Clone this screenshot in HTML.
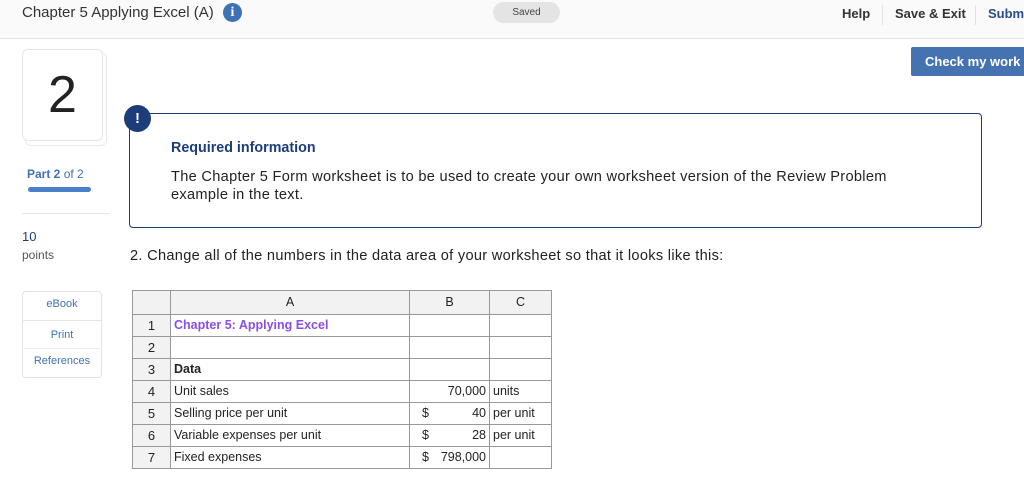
<!DOCTYPE html>
<html><head><style>
body{margin:0;width:1024px;height:491px;background:#fff;font-family:"Liberation Sans",sans-serif;position:relative;overflow:hidden}
.a{position:absolute;white-space:nowrap}
.hdr{position:absolute;left:0;top:0;width:1024px;height:38px;background:#fafafa;border-bottom:1px solid #e6e6e6}
table{position:absolute;left:132px;top:290px;border-collapse:collapse;font-size:12.5px;color:#222}
td{border:1px solid #999;height:21px;padding:0 3px;line-height:21px}
.h td{background:#f2f2f2;text-align:center;height:23px}
td.n{background:#f2f2f2;text-align:center;width:31px;font-size:13px}
</style></head><body>
<div class="hdr"></div>
<div class="a" style="left:22px;top:4px;font-size:15px;color:#333">Chapter 5 Applying Excel (A)</div>
<div class="a" style="left:223px;top:3px;width:19px;height:19px;border-radius:50%;background:#3f72b5;color:#fff;font-weight:bold;font-size:14px;text-align:center;line-height:19px;font-family:'Liberation Serif',serif">i</div>
<div class="a" style="left:493px;top:2px;width:67px;height:21px;border-radius:11px;background:#e4e4e4;color:#444;font-size:10px;text-align:center;line-height:21px">Saved</div>
<div class="a" style="left:842px;top:6px;font-size:13px;font-weight:bold;color:#333">Help</div>
<div class="a" style="left:882px;top:5px;width:1px;height:20px;background:#e2e2e2"></div>
<div class="a" style="left:895px;top:6px;font-size:13px;font-weight:bold;color:#333">Save &amp; Exit</div>
<div class="a" style="left:975px;top:5px;width:1px;height:20px;background:#e2e2e2"></div>
<div class="a" style="left:988px;top:6px;font-size:13px;font-weight:bold;color:#2a4d8a">Submit</div>
<div class="a" style="left:911px;top:47px;width:120px;height:29px;background:#4572b0;border-radius:2px;color:#fff;font-weight:bold;font-size:13px;line-height:29px;padding-left:14px">Check my work</div>
<div class="a" style="left:25px;top:52px;width:80px;height:92px;border:1px solid #eaeaea;border-radius:6px"></div>
<div class="a" style="left:22px;top:49px;width:79px;height:90px;border:1px solid #e6e6e6;border-radius:6px;background:#fff;font-size:52px;color:#222;text-align:center;line-height:90px">2</div>
<div class="a" style="left:27px;top:167px;font-size:12px;color:#3f72b5"><b>Part 2</b> of 2</div>
<div class="a" style="left:28px;top:187px;width:63px;height:5px;border-radius:3px;background:#4a80c8"></div>
<div class="a" style="left:22px;top:213px;width:88px;height:1px;background:#e6e6e6"></div>
<div class="a" style="left:22px;top:229px;font-size:13px;color:#1d3d7a">10</div>
<div class="a" style="left:22px;top:248px;font-size:12px;color:#555">points</div>
<div class="a" style="left:22px;top:291px;width:78px;height:85px;border:1px solid #e2e2e2;border-radius:4px"></div>
<div class="a" style="left:22px;top:320px;width:80px;height:1px;background:#e6e6e6"></div>
<div class="a" style="left:22px;top:348px;width:80px;height:1px;background:#eee"></div>
<div class="a" style="left:23px;top:298px;width:78px;text-align:center;font-size:11px;color:#3f72b5">eBook</div>
<div class="a" style="left:23px;top:329px;width:78px;text-align:center;font-size:11px;color:#3f72b5">Print</div>
<div class="a" style="left:23px;top:355px;width:78px;text-align:center;font-size:11px;color:#3f72b5">References</div>
<div class="a" style="left:129px;top:113px;width:851px;height:113px;border:1px solid #1d3d7a;border-radius:4px"></div>
<div class="a" style="left:124px;top:105px;width:27px;height:27px;border-radius:50%;background:#1d3d7a;color:#fff;font-weight:bold;font-size:15px;text-align:center;line-height:27px">!</div>
<div class="a" style="left:171px;top:140px;font-size:14.3px;font-weight:bold;color:#1d3d7a">Required information</div>
<div class="a" style="left:171px;top:168px;font-size:14.6px;letter-spacing:0.3px;color:#222;line-height:18px;white-space:normal;width:740px">The Chapter 5 Form worksheet is to be used to create your own worksheet version of the Review Problem example in the text.</div>
<div class="a" style="left:130px;top:248px;font-size:14.6px;letter-spacing:0.3px;color:#222">2. Change all of the numbers in the data area of your worksheet so that it looks like this:</div>
<table>
<tr class="h"><td style="width:31px"></td><td style="width:232px">A</td><td style="width:73px">B</td><td style="width:55px">C</td></tr>
<tr><td class="n">1</td><td style="color:#8a4fe0;font-weight:bold">Chapter 5: Applying Excel</td><td></td><td></td></tr>
<tr><td class="n">2</td><td></td><td></td><td></td></tr>
<tr><td class="n">3</td><td style="font-weight:bold">Data</td><td></td><td></td></tr>
<tr><td class="n">4</td><td>Unit sales</td><td style="text-align:right">70,000</td><td>units</td></tr>
<tr><td class="n">5</td><td>Selling price per unit</td><td style="text-align:right"><span style="float:left;padding-left:9px">$</span>40</td><td>per unit</td></tr>
<tr><td class="n">6</td><td>Variable expenses per unit</td><td style="text-align:right"><span style="float:left;padding-left:9px">$</span>28</td><td>per unit</td></tr>
<tr><td class="n">7</td><td>Fixed expenses</td><td style="text-align:right"><span style="float:left;padding-left:9px">$</span>798,000</td><td></td></tr>
</table>
</body></html>
